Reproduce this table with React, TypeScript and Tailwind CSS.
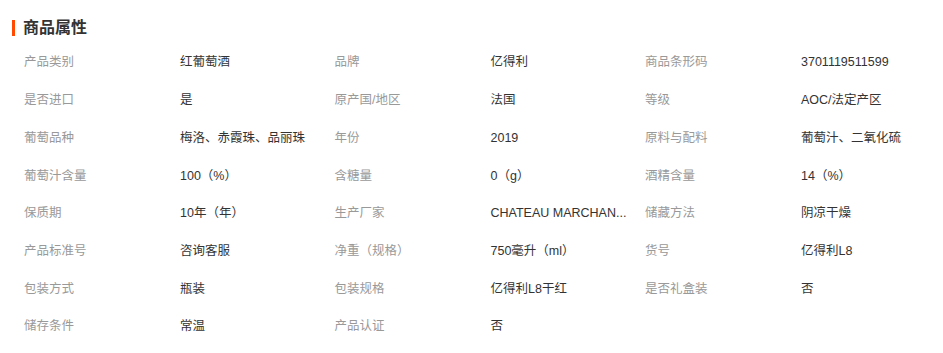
const attrs: [string, string][] = [
  ["产品类别", "红葡萄酒"],
  ["品牌", "亿得利"],
  ["商品条形码", "3701119511599"],
  ["是否进口", "是"],
  ["原产国/地区", "法国"],
  ["等级", "AOC/法定产区"],
  ["葡萄品种", "梅洛、赤霞珠、品丽珠"],
  ["年份", "2019"],
  ["原料与配料", "葡萄汁、二氧化硫"],
  ["葡萄汁含量", "100（%）"],
  ["含糖量", "0（g）"],
  ["酒精含量", "14（%）"],
  ["保质期", "10年（年）"],
  ["生产厂家", "CHATEAU MARCHAN..."],
  ["储藏方法", "阴凉干燥"],
  ["产品标准号", "咨询客服"],
  ["净重（规格）", "750毫升（ml）"],
  ["货号", "亿得利L8"],
  ["包装方式", "瓶装"],
  ["包装规格", "亿得利L8干红"],
  ["是否礼盒装", "否"],
  ["储存条件", "常温"],
  ["产品认证", "否"],
];

export default function App() {
  return (
    <div className="w-[943px] h-[353px] overflow-hidden bg-white font-['Liberation_Sans','Noto_Sans_CJK_SC',sans-serif]">
      {/* header */}
      <div className="flex items-center gap-2 pl-3 pt-[15px] h-[40px]">
        <div className="w-[3px] h-[16px] bg-[#ff4a00]" />
        <h2 className="text-[16px] font-bold text-[#333] leading-none">商品属性</h2>
      </div>

      <div className="grid grid-cols-[310.5px_310.5px_1fr] pl-6 pt-[4px]">
        {attrs.map(([label, value], i) => (
          <div key={i} className="flex items-center h-[37.7px] text-[12.5px]">
            <span className="w-[156px] shrink-0 text-[#999]">{label}</span>
            <span className="whitespace-nowrap text-[#333]">{value}</span>
          </div>
        ))}
      </div>
    </div>
  );
}
